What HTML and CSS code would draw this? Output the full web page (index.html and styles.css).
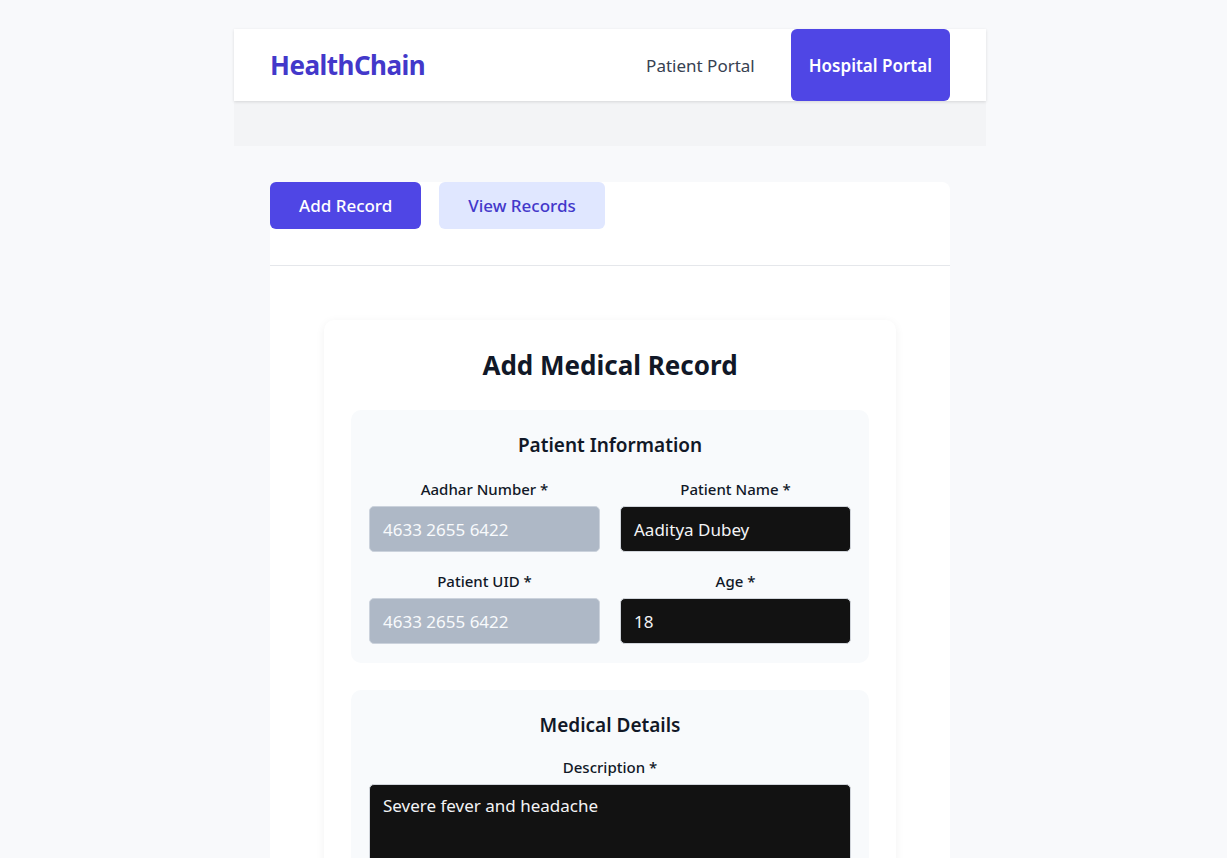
FILE: index.html
```html
<!DOCTYPE html>
<html lang="en">
<head>
<meta charset="utf-8">
<title>HealthChain</title>
<link rel="stylesheet" href="styles.css">
</head>
<body>
<div class="app">
  <nav class="nav">
    <div class="brand">HealthChain</div>
    <div class="nav-links">
      <a class="nav-link">Patient Portal</a>
      <a class="nav-link active">Hospital Portal</a>
    </div>
  </nav>
  <div class="subbar"></div>
  <main class="main">
    <section class="panel">
      <div class="tabs">
        <button class="tab active">Add Record</button>
        <button class="tab">View Records</button>
      </div>
      <div class="panel-body">
        <div class="form-card">
          <h1 class="form-title">Add Medical Record</h1>
          <div class="group">
            <h2 class="group-title">Patient Information</h2>
            <div class="grid">
              <div class="field">
                <label class="label">Aadhar Number *</label>
                <div class="input disabled">4633 2655 6422</div>
              </div>
              <div class="field">
                <label class="label">Patient Name *</label>
                <div class="input">Aaditya Dubey</div>
              </div>
              <div class="field">
                <label class="label">Patient UID *</label>
                <div class="input disabled">4633 2655 6422</div>
              </div>
              <div class="field">
                <label class="label">Age *</label>
                <div class="input">18</div>
              </div>
            </div>
          </div>
          <div class="group">
            <h2 class="group-title tight">Medical Details</h2>
            <div class="field">
              <label class="label">Description *</label>
              <div class="input textarea">Severe fever and headache</div>
            </div>
          </div>
        </div>
      </div>
    </section>
  </main>
</div>
</body>
</html>
```
FILE: styles.css
```css
* { box-sizing: border-box; }
html, body { margin: 0; padding: 0; }
body {
  background: #f8f9fb;
  font-family: "Noto Sans", "Open Sans", sans-serif;
  color: #111827;
}
.app {
  width: 752px;
  margin-left: 234px;
  padding-top: 29px;
}
.nav {
  height: 72px;
  background: #fff;
  display: flex;
  align-items: center;
  justify-content: space-between;
  padding: 0 36px;
  box-shadow: 0 1px 3px rgba(0,0,0,0.12);
  position: relative;
  z-index: 1;
}
.brand {
  font-size: 26px;
  font-weight: 700;
  color: #4338ca;
  letter-spacing: -0.5px;
}
.nav-links {
  display: flex;
  align-items: center;
  height: 100%;
  gap: 18px;
}
.nav-link {
  display: flex;
  align-items: center;
  height: 100%;
  padding: 0 18px;
  font-size: 17px;
  color: #374151;
  border-radius: 6px;
}
.nav-link.active {
  background: #4f46e5;
  color: #fff;
  font-weight: 600;
}
.subbar {
  height: 45px;
  background: #f3f4f6;
}
.main {
  padding: 36px 36px 0;
}
.panel {
  background: #fff;
  border-radius: 8px;
  min-height: 700px;
}
.tabs {
  display: flex;
  gap: 18px;
  height: 84px;
  border-bottom: 1px solid #e5e7eb;
  align-items: flex-start;
}
.tab {
  height: 47px;
  padding: 0 29px;
  border: none;
  border-radius: 6px;
  font-family: inherit;
  font-size: 17px;
  font-weight: 500;
  background: #e0e7ff;
  color: #4338ca;
}
.tab.active {
  background: #4f46e5;
  color: #fff;
}
.panel-body {
  padding: 54px 54px 0;
}
.form-card {
  background: #fff;
  border-radius: 10px;
  box-shadow: 0 2px 10px rgba(0,0,0,0.06);
  padding: 27px 27px 28px;
}
.form-title {
  margin: 0 0 27px;
  text-align: center;
  font-size: 26px;
  font-weight: 700;
  line-height: 36px;
}
.group {
  background: #f8fafc;
  border-radius: 10px;
  padding: 20px 18px 19px;
  margin-bottom: 27px;
}
.group-title {
  margin: 0 0 18px;
  text-align: center;
  font-size: 19px;
  font-weight: 600;
  line-height: 30px;
}
.group-title.tight {
  margin-bottom: 16px;
}
.grid {
  display: grid;
  grid-template-columns: 1fr 1fr;
  column-gap: 20px;
  row-gap: 18px;
}
.field {
  display: flex;
  flex-direction: column;
}
.label {
  text-align: center;
  font-size: 15px;
  font-weight: 500;
  line-height: 22px;
  margin-bottom: 6px;
  color: #111827;
}
.input {
  height: 46px;
  border-radius: 5px;
  background: #121212;
  color: #f3f4f6;
  font-size: 17px;
  padding: 0 13px;
  display: flex;
  align-items: center;
  border: 1px solid #d1d5db;
}
.input.disabled {
  background: #aeb8c6;
  color: #f8fafc;
  border-color: #cbd2dc;
}
.textarea {
  height: 110px;
  align-items: flex-start;
  padding-top: 9px;
}
```
